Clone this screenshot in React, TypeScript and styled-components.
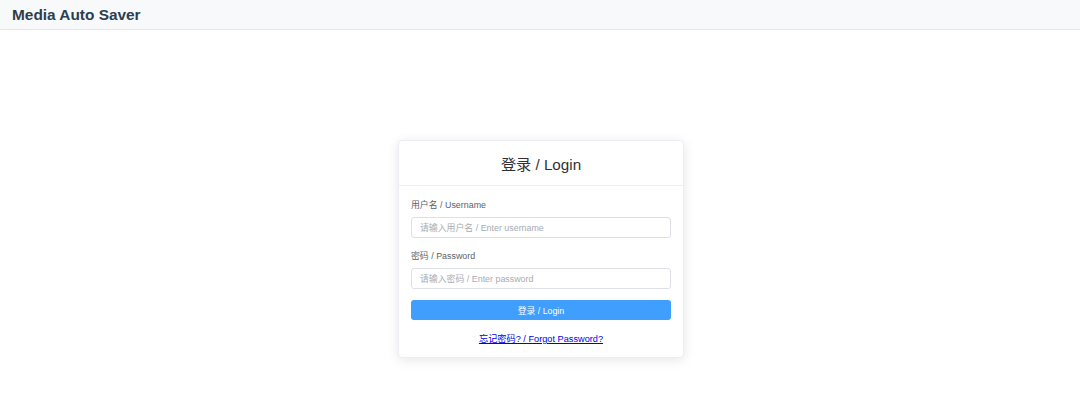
import React from "react";
import styled, { createGlobalStyle } from "styled-components";

const Global = createGlobalStyle`
  * { box-sizing: border-box; }
  html, body { margin: 0; padding: 0; background: #ffffff; }
  body { font-family: "Liberation Sans", "Noto Sans CJK SC", Arial, sans-serif; }
`;

const Page = styled.div`
  display: flex;
  flex-direction: column;
  min-height: 418px;
`;

const TopBar = styled.header`
  height: 30px;
  background: #f8f9fa;
  border-bottom: 1px solid #e4e7ed;
  display: flex;
  align-items: center;
  padding: 0 12px;
`;

const Brand = styled.h1`
  margin: 0;
  font-size: 15.4px;
  font-weight: 700;
  color: #2c3e50;
  line-height: 1;
`;

const Main = styled.main`
  display: flex;
  justify-content: center;
  padding: 110px 0 0 2px;
`;

const Card = styled.div`
  width: 286px;
  background: #fff;
  border: 1px solid #ebeef5;
  border-radius: 4px;
  box-shadow: 0 2px 12px rgba(0, 0, 0, 0.1);
`;

const CardHeader = styled.div`
  height: 45px;
  border-bottom: 1px solid #ebeef5;
  display: flex;
  align-items: center;
  justify-content: center;
`;

const CardTitle = styled.h2`
  margin: 0;
  font-size: 15.2px;
  font-weight: 400;
  color: #303133;
`;

const CardBody = styled.form`
  padding: 12px 12px 11px;
  display: flex;
  flex-direction: column;
`;

const Field = styled.div`
  display: flex;
  flex-direction: column;
  gap: 5px;
  margin-bottom: 11px;
`;

const Label = styled.label`
  font-size: 8.9px;
  line-height: 14px;
  color: #606266;
`;

const Input = styled.input`
  height: 21px;
  border: 1px solid #dcdfe6;
  border-radius: 3px;
  padding: 0 8px;
  font-size: 8.9px;
  font-family: inherit;
  color: #606266;
  outline: none;
  &::placeholder { color: #a8abb2; }
`;

const SubmitButton = styled.button`
  height: 20px;
  border: none;
  border-radius: 3px;
  background: #409eff;
  color: #fff;
  font-size: 8.8px;
  font-family: inherit;
  cursor: pointer;
`;

const LinkRow = styled.div`
  display: flex;
  justify-content: center;
  margin-top: 12px;
`;

const ForgotLink = styled.a`
  font-size: 9.2px;
  line-height: 14px;
  color: #0000ee;
  text-decoration: underline;
`;

export default function App() {
  return (
    <Page>
      <Global />
      <TopBar>
        <Brand>Media Auto Saver</Brand>
      </TopBar>
      <Main>
        <Card>
          <CardHeader>
            <CardTitle>登录 / Login</CardTitle>
          </CardHeader>
          <CardBody onSubmit={(e) => e.preventDefault()}>
            <Field>
              <Label>用户名 / Username</Label>
              <Input placeholder="请输入用户名 / Enter username" />
            </Field>
            <Field>
              <Label>密码 / Password</Label>
              <Input type="password" placeholder="请输入密码 / Enter password" />
            </Field>
            <SubmitButton type="submit">登录 / Login</SubmitButton>
            <LinkRow>
              <ForgotLink href="#">忘记密码? / Forgot Password?</ForgotLink>
            </LinkRow>
          </CardBody>
        </Card>
      </Main>
    </Page>
  );
}
